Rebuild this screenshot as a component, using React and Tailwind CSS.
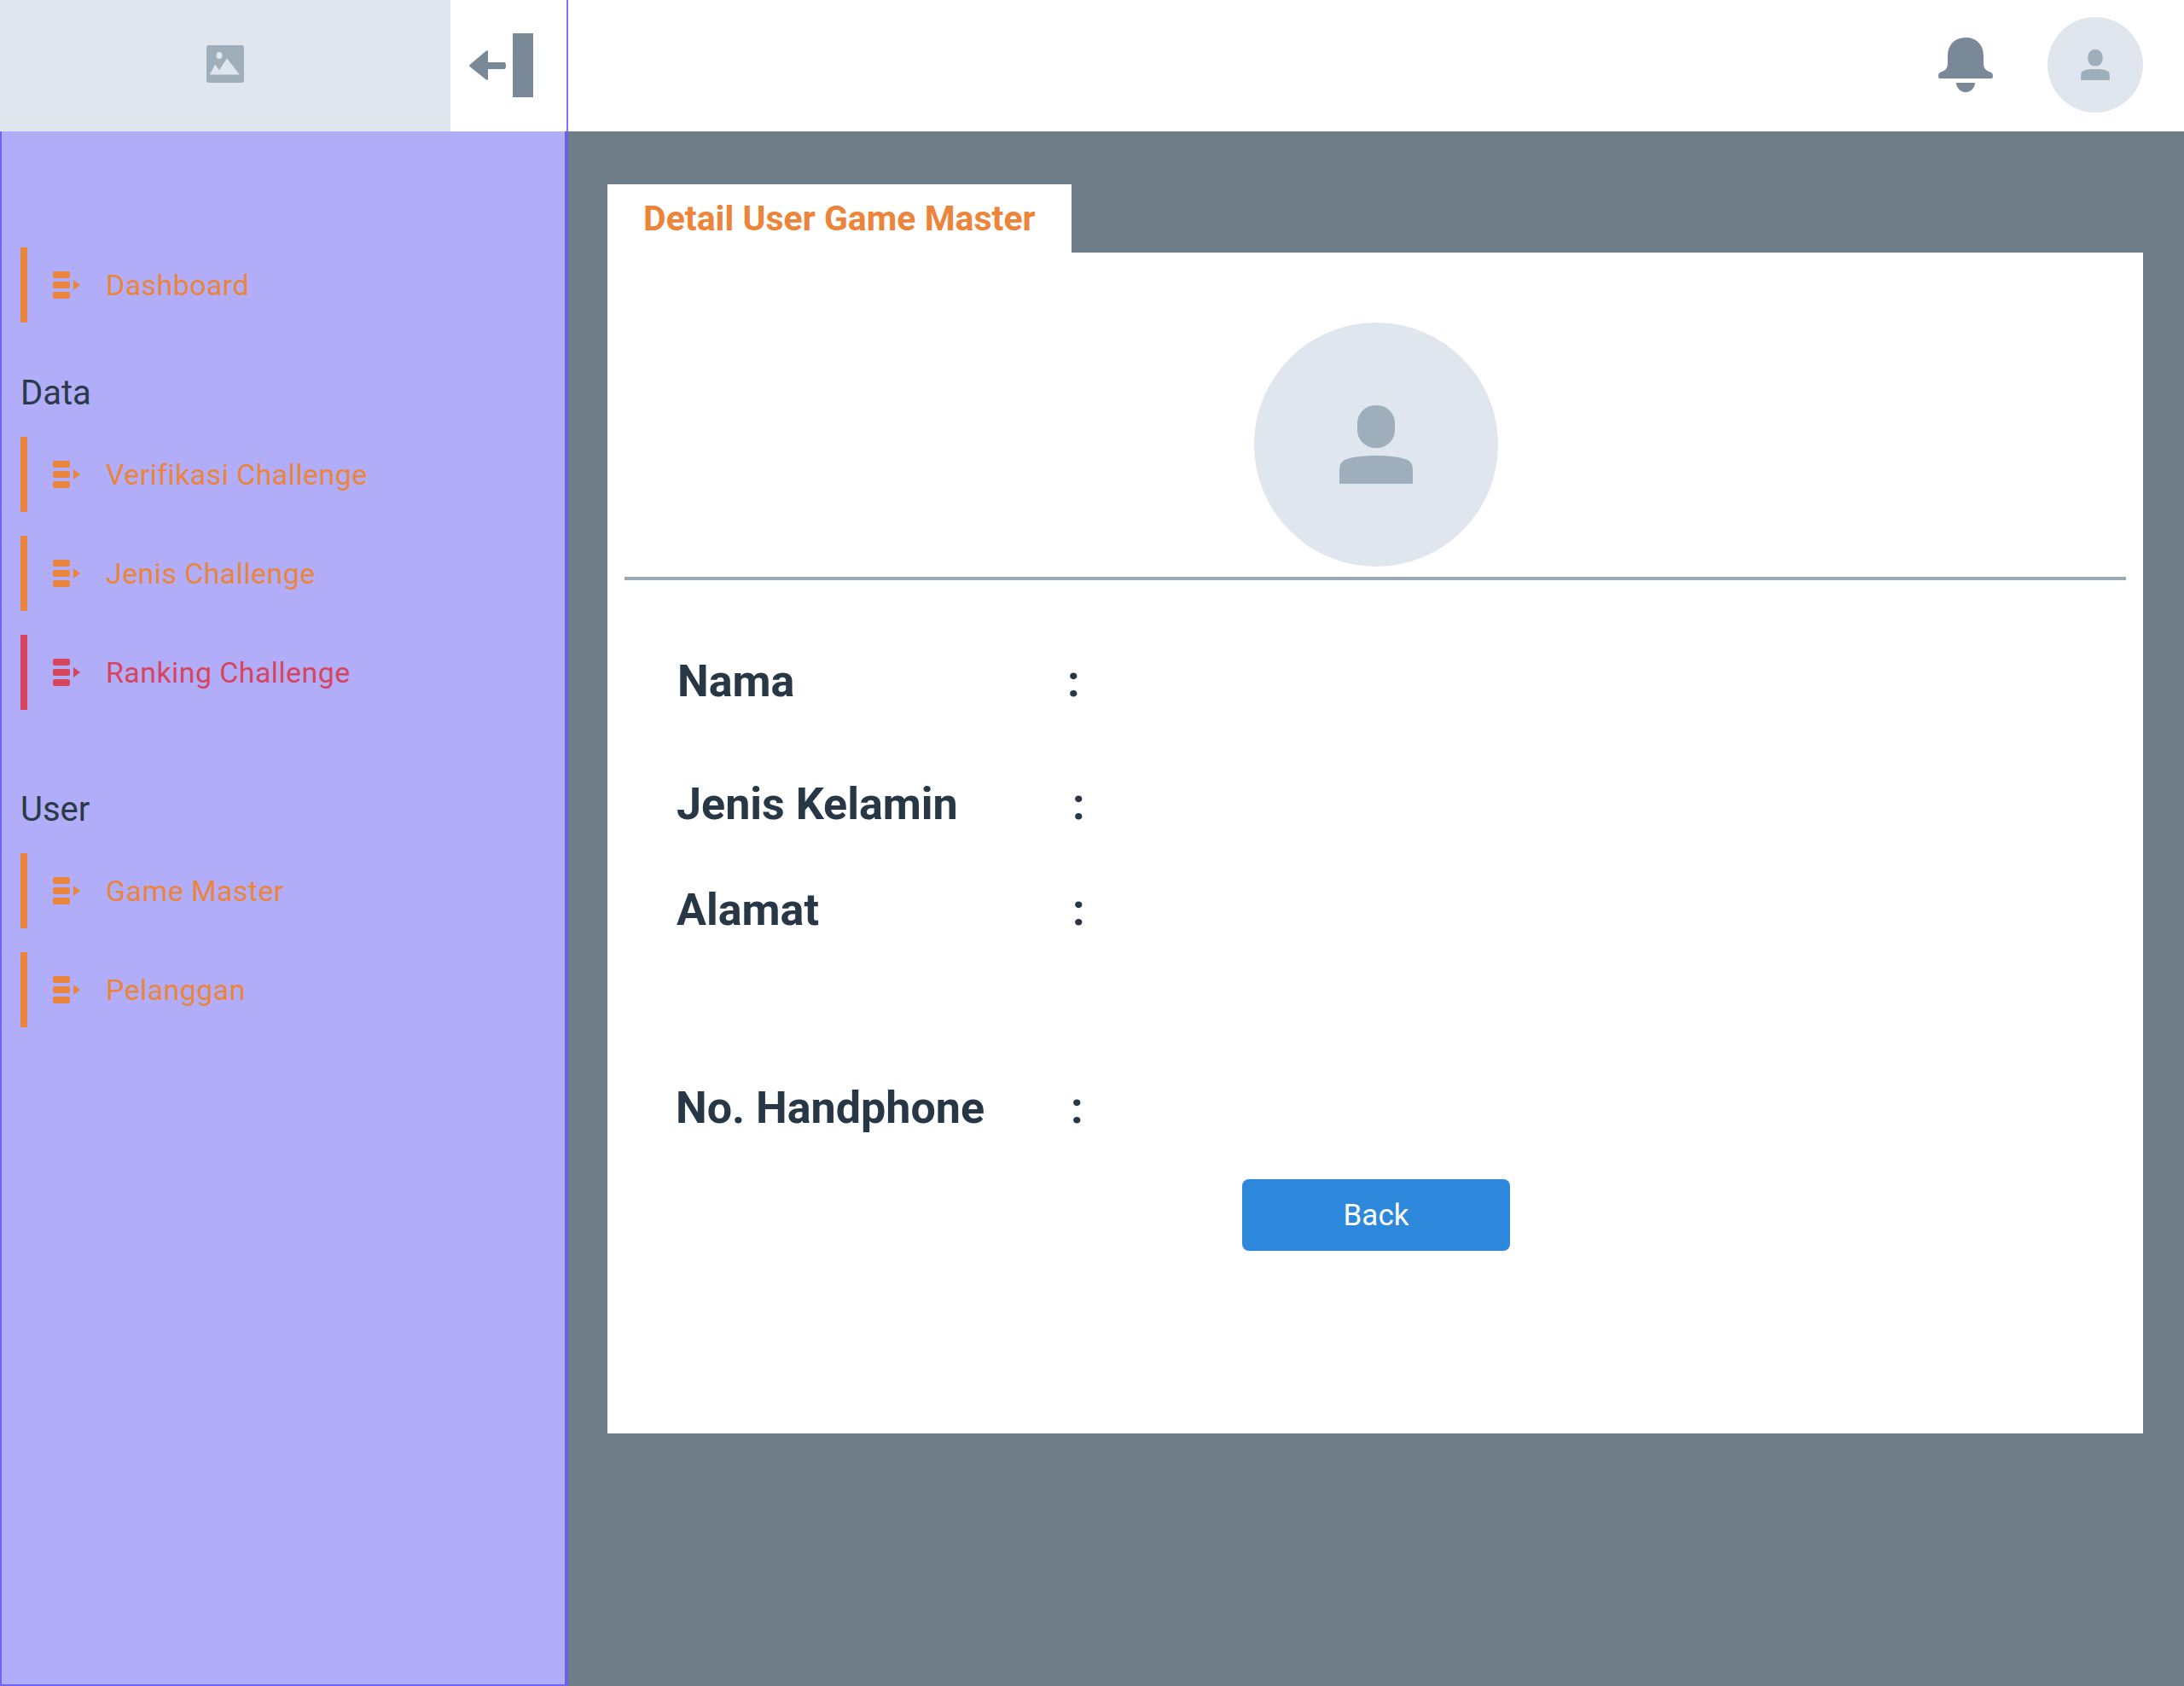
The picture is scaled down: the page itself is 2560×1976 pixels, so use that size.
import React from "react";

const font = "font-['Roboto','Liberation_Sans',sans-serif]";

const MenuIcon = ({ className }) => (
  <svg width="32" height="32" viewBox="0 0 32 32" className={className} fill="currentColor">
    <rect x="0" y="0" width="20" height="8" rx="2" />
    <rect x="0" y="12" width="20" height="8" rx="2" />
    <rect x="0" y="24" width="20" height="8" rx="2" />
    <path d="M24 10 L32 16 L24 22 Z" />
  </svg>
);

const PersonIcon = ({ width, height, className }) => (
  <svg width={width} height={height} viewBox="0 0 86 92" className={className} fill="currentColor">
    <rect x="21" y="0" width="44" height="50" rx="21" />
    <path d="M0 77 C0 68 3 65 9 63 C18 60 30 59 43 59 C56 59 68 60 77 63 C83 65 86 68 86 77 L86 91 Q86 92 85 92 L1 92 Q0 92 0 91 Z" />
  </svg>
);

const NavItem = ({ label, active }) => (
  <div className={`flex items-center h-[88px] ml-[22px] border-l-[8px] ${active ? "border-[#D5465D] text-[#D5465D]" : "border-[#E9853C] text-[#E9853C]"}`}>
    <MenuIcon className="ml-[30px] mr-[30px] shrink-0" />
    <span className="text-[34px] tracking-[0.4px]">{label}</span>
  </div>
);

const SectionLabel = ({ children, className }) => (
  <div className={`ml-[22px] text-[40px] leading-[44px] text-[#2A3A47] ${className}`}>{children}</div>
);

const Row = ({ label, left, colon, className }) => (
  <div className={`relative h-[60px] flex items-center text-[52px] font-bold text-[#283745] ${className}`} style={{ paddingLeft: left }}>
    <span>{label}</span>
    <span className="absolute" style={{ left: colon }}>:</span>
  </div>
);

export default function App() {
  return (
    <div className={`${font} w-[2560px] h-[1976px] flex flex-col bg-[#6F7D88] overflow-hidden`}>
      {/* Header */}
      <div className="h-[154px] flex bg-white shrink-0">
        <div className="w-[528px] bg-[#DFE6EE] flex items-center justify-center">
          <svg width="44" height="44" viewBox="0 0 44 44" fill="none" className="-mt-[4px]">
            <rect width="44" height="44" rx="3" fill="#9FAEBB" />
            <ellipse cx="15" cy="12" rx="3.5" ry="4" fill="#DFE6EE" />
            <path d="M4 34.5 L10 22.5 L15 29 L24 15.5 L39 34.5 Z" fill="#DFE6EE" />
          </svg>
        </div>
        <div className="w-[138px] border-r-2 border-[#7C72F2] flex items-center pl-[22px]">
          <svg width="75" height="75" viewBox="0 0 75 75" fill="#7A8997" className="-mt-[1px]">
            <path d="M0.5 37 L20 20.5 Q22 19.5 22 21.5 L22 34 L41 34 Q43 34 43 38 Q43 42 41 42 L22 42 L22 53.5 Q22 55.5 20 54.5 L0.5 39 Q0 38 0.5 37 Z" />
            <rect x="51" y="0" width="24" height="75" />
          </svg>
        </div>
        <div className="flex-1 flex items-center justify-end pr-[48px]">
          <svg width="64" height="64" viewBox="0 0 64 64" fill="#7A8997" className="mr-[64px] -mt-[2px]">
            <path d="M11 21 C11 8 20 0 32 0 C44 0 53 8 53 21 L53 30 C53 37 57 39 62 41 Q64 42 64 44.5 Q64 48 62 48 L2 48 Q0 48 0 44.5 Q0 42 2 41 C7 39 11 37 11 30 Z" />
            <path d="M21 53 L43 53 C43 59 38 64 32 64 C26 64 21 59 21 53 Z" />
          </svg>
          <div className="w-[112px] h-[112px] -mt-[2px] rounded-full bg-[#DFE6EE] flex items-center justify-center text-[#9FAEBB]">
            <PersonIcon width={34} height={36} />
          </div>
        </div>
      </div>

      <div className="flex-1 flex min-h-0">
        {/* Sidebar */}
        <div className="w-[666px] shrink-0 bg-[#B2ADF9] border-l-2 border-b-2 border-[#6F66F5] border-r-4 border-r-[#6A60E0] pt-[136px]">
          <NavItem label="Dashboard" />
          <SectionLabel className="mt-[61px] mb-[29px]">Data</SectionLabel>
          <div className="flex flex-col gap-[28px]">
            <NavItem label="Verifikasi Challenge" />
            <NavItem label="Jenis Challenge" />
            <NavItem label="Ranking Challenge" active />
          </div>
          <SectionLabel className="mt-[95px] mb-[29px]">User</SectionLabel>
          <div className="flex flex-col gap-[28px]">
            <NavItem label="Game Master" />
            <NavItem label="Pelanggan" />
          </div>
        </div>

        {/* Content */}
        <div className="flex-1 pl-[46px] pr-[48px] pt-[62px]">
          <div className="w-[544px] h-[80px] bg-white flex items-center pl-[42px] pt-[2px] text-[41px] font-bold text-[#EC843A]">
            Detail User Game Master
          </div>
          <div className="h-[1384px] bg-white pt-[82px]">
            <div className="w-[286px] h-[286px] ml-[758px] rounded-full bg-[#DFE6EE] flex items-center justify-center text-[#9FAEBB]">
              <PersonIcon width={86} height={92} />
            </div>
            <div className="mx-[20px] mt-[12px] h-[4px] bg-[#9BAAB7]" />
            <Row label="Nama" left={82} colon={539} className="mt-[89px]" />
            <Row label="Jenis Kelamin" left={81} colon={545} className="mt-[84px]" />
            <Row label="Alamat" left={81} colon={545} className="mt-[64px]" />
            <Row label="No. Handphone" left={80} colon={543} className="mt-[172px]" />
            <button className="block ml-[744px] mt-[53px] w-[314px] h-[84px] pt-[2px] rounded-[8px] bg-[#2D88DB] text-white text-[35px]">
              Back
            </button>
          </div>
        </div>
      </div>
    </div>
  );
}
